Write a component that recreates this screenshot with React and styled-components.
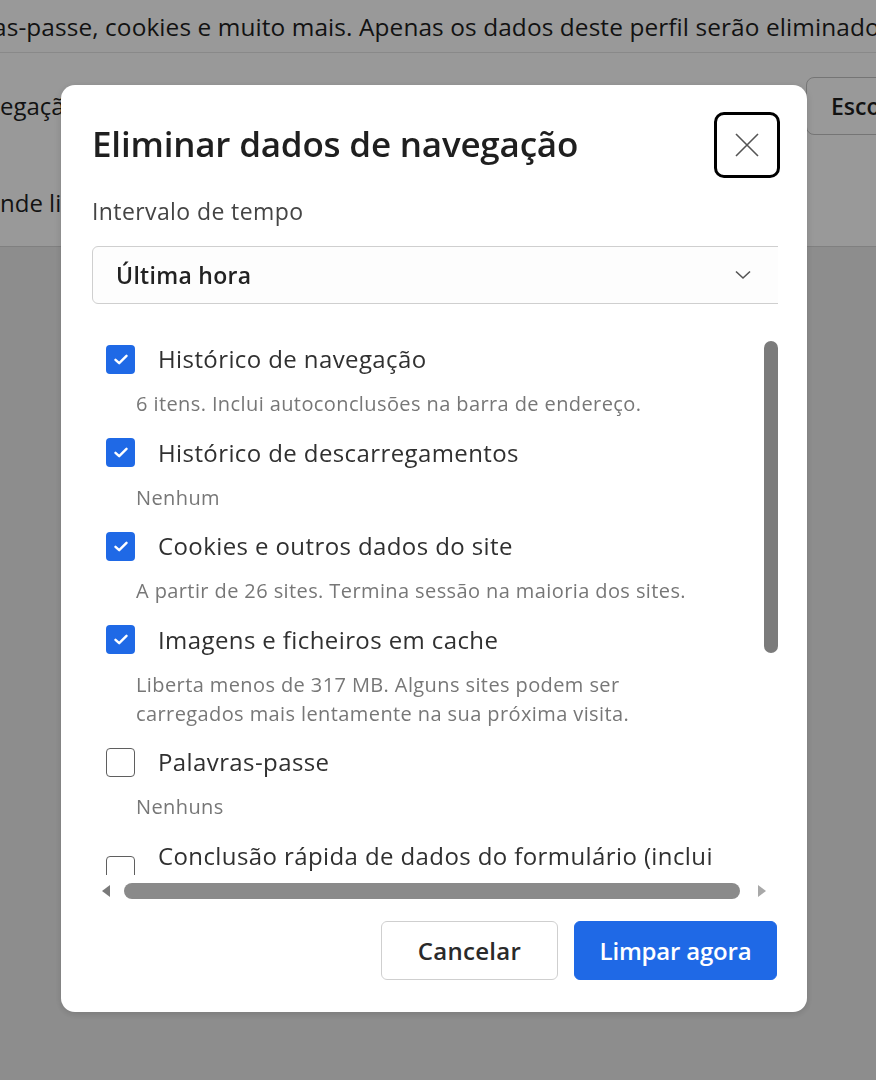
import React from 'react';
import styled, { createGlobalStyle } from 'styled-components';

const GlobalStyle = createGlobalStyle`
  html, body {
    margin: 0;
    padding: 0;
    background: #ececec;
    font-family: "Open Sans", "Liberation Sans", sans-serif;
    overflow: hidden;
  }
`;

const Page = styled.div`
  width: 876px;
  height: 1080px;
  display: flex;
  flex-direction: column;
`;

const Card = styled.div`
  background: #ffffff;
  border-bottom: 1px solid #d6d6d6;
  display: flex;
  flex-direction: column;
`;

const TopLine = styled.div`
  height: 52px;
  display: flex;
  align-items: center;
  font-size: 24.4px;
  letter-spacing: 0.1px;
  color: #1f1f1f;
  white-space: nowrap;
  overflow: hidden;
  text-indent: -7px;
  border-bottom: 1px solid #e4e4e4;
`;

const CardRow = styled.div`
  height: ${p => p.$h}px;
  display: flex;
  align-items: center;
  font-size: 24px;
  color: #1f1f1f;
  white-space: nowrap;
  overflow: hidden;
`;

const GhostButton = styled.div`
  flex: 0 0 200px;
  height: 58px;
  box-sizing: border-box;
  padding: 0 24px;
  margin-left: auto;
  margin-right: -130px;
  border: 1px solid #c4c4c4;
  border-radius: 8px;
  display: flex;
  align-items: center;
  font-size: 23px;
  font-weight: 600;
  color: #1f1f1f;
`;

const Overlay = styled.div`
  position: fixed;
  inset: 0;
  background: rgba(0, 0, 0, 0.4);
`;

const Dialog = styled.div`
  position: fixed;
  left: 61px;
  top: 85px;
  width: 746px;
  height: 927px;
  box-sizing: border-box;
  background: #ffffff;
  border-radius: 14px;
  padding: 27px 27px 31px 31px;
  display: flex;
  flex-direction: column;
  box-shadow: 0 2px 8px rgba(0, 0, 0, 0.15);
`;

const Header = styled.div`
  display: flex;
  align-items: center;
  justify-content: space-between;
  height: 66px;
`;

const Title = styled.h1`
  margin: 0 0 4px;
  font-size: 35px;
  font-weight: 600;
  color: #1f1f1f;
  letter-spacing: -0.2px;
`;

const CloseButton = styled.button`
  width: 66px;
  height: 66px;
  box-sizing: border-box;
  border: 3px solid #000000;
  border-radius: 10px;
  background: #ffffff;
  display: flex;
  align-items: center;
  justify-content: center;
  padding: 0;
`;

const Body = styled.div`
  margin-right: 2px;
  overflow: hidden;
  display: flex;
  flex-direction: column;
`;

const FieldLabel = styled.div`
  margin-top: 18px;
  font-size: 23px;
  letter-spacing: 0.4px;
  line-height: 30px;
  color: #444444;
`;

const Select = styled.div`
  margin-top: 20px;
  width: 700px;
  height: 58px;
  box-sizing: border-box;
  border: 1px solid #cfcfcf;
  border-radius: 6px;
  background: #fdfdfd;
  display: flex;
  align-items: center;
  justify-content: space-between;
  padding: 0 40px 0 23px;
  font-size: 23px;
  letter-spacing: 0.3px;
  font-weight: 600;
  color: #222222;
`;

const ListArea = styled.div`
  margin-top: 24px;
  height: 547px;
  display: flex;
  overflow: hidden;
`;

const List = styled.div`
  flex: 1;
  display: flex;
  flex-direction: column;
  gap: 19.5px;
  padding-top: 16px;
`;

const Item = styled.div`
  display: flex;
  flex-direction: column;
`;

const ItemRow = styled.label`
  display: flex;
  align-items: center;
  gap: 23px;
  padding-left: 14px;
`;

const Box = styled.span`
  flex: 0 0 29px;
  width: 29px;
  height: 29px;
  box-sizing: border-box;
  border-radius: 4px;
  background: ${p => (p.$checked ? '#1f69e6' : '#ffffff')};
  border: ${p => (p.$checked ? 'none' : '1.5px solid #5f5f5f')};
  display: flex;
  align-items: center;
  justify-content: center;
`;

const ItemLabel = styled.span`
  font-size: 24px;
  letter-spacing: 0.4px;
  line-height: 30px;
  color: #303030;
  max-width: 590px;
`;

const ItemSub = styled.div`
  margin-top: 15px;
  padding-left: 44px;
  font-size: 20px;
  letter-spacing: 0.4px;
  line-height: 29px;
  color: #777777;
  max-width: 566px;
`;

const VTrack = styled.div`
  flex: 0 0 18px;
  padding-top: 13px;
  display: flex;
  justify-content: flex-end;
`;

const VThumb = styled.div`
  width: 14px;
  height: 312px;
  border-radius: 7px;
  background: #7b7b7b;
`;

const HTrack = styled.div`
  height: 24px;
  margin-top: 4px;
  display: flex;
  align-items: center;
  padding: 0 12px 0 10px;
  gap: 14px;
`;

const Arrow = styled.span`
  width: 0;
  height: 0;
  border-top: 6px solid transparent;
  border-bottom: 6px solid transparent;
  ${p => (p.$dir === 'left'
    ? 'border-right: 8px solid #7a7a7a;'
    : 'border-left: 8px solid #a8a8a8;')}
`;

const HThumb = styled.div`
  flex: 1;
  height: 16px;
  border-radius: 8px;
  background: #8a8a8a;
  margin-right: 4px;
`;

const Footer = styled.div`
  margin-top: 18px;
  margin-right: 3px;
  display: flex;
  justify-content: flex-end;
  gap: 16px;
`;

const Button = styled.button`
  width: ${p => (p.$primary ? 203 : 177)}px;
  height: 59px;
  box-sizing: border-box;
  padding: 0;
  border-radius: 6px;
  border: 1px solid ${p => (p.$primary ? '#1f69e6' : '#cfcfcf')};
  background: ${p => (p.$primary ? '#1f69e6' : '#ffffff')};
  color: ${p => (p.$primary ? '#ffffff' : '#2a2a2a')};
  font-family: "Open Sans", "Liberation Sans", sans-serif;
  font-size: 24px;
  letter-spacing: ${p => (p.$primary ? -0.2 : 0.3)}px;
  font-weight: 600;
`;

const Check = () => (
  <svg width="14" height="11" viewBox="0 0 14 11" fill="none">
    <path d="M1.5 5.8 L5.2 9.2 L12.5 1.8" stroke="#ffffff" strokeWidth="2.4" strokeLinecap="round" strokeLinejoin="round" />
  </svg>
);

const items = [
  { label: 'Histórico de navegação', sub: '6 itens. Inclui autoconclusões na barra de endereço.', checked: true },
  { label: 'Histórico de descarregamentos', sub: 'Nenhum', checked: true },
  { label: 'Cookies e outros dados do site', sub: 'A partir de 26 sites. Termina sessão na maioria dos sites.', checked: true },
  { label: 'Imagens e ficheiros em cache', sub: 'Liberta menos de 317 MB. Alguns sites podem ser carregados mais lentamente na sua próxima visita.', checked: true },
  { label: 'Palavras-passe', sub: 'Nenhuns', checked: false },
  { label: 'Conclusão rápida de dados do formulário (inclui moradas e cartões)', sub: '', checked: false },
];

export default function App() {
  return (
    <>
      <GlobalStyle />
      <Page>
        <Card>
          <TopLine>as-passe, cookies e muito mais. Apenas os dados deste perfil serão eliminados.</TopLine>
          <CardRow $h={105}>
            <span>egação</span>
            <GhostButton>Escolher</GhostButton>
          </CardRow>
          <CardRow $h={88}>
            <span>nde limpar</span>
          </CardRow>
        </Card>
      </Page>
      <Overlay />
      <Dialog role="dialog">
        <Header>
          <Title>Eliminar dados de navegação</Title>
          <CloseButton aria-label="Fechar">
            <svg width="26" height="26" viewBox="0 0 26 26">
              <path d="M2 2 L24 24 M24 2 L2 24" stroke="#555555" strokeWidth="1.6" />
            </svg>
          </CloseButton>
        </Header>
        <Body>
          <FieldLabel>Intervalo de tempo</FieldLabel>
          <Select>
            <span>Última hora</span>
            <svg width="16" height="10" viewBox="0 0 16 10">
              <path d="M1 1.5 L8 8 L15 1.5" stroke="#555555" strokeWidth="1.6" fill="none" />
            </svg>
          </Select>
          <ListArea>
            <List>
              {items.map(it => (
                <Item key={it.label}>
                  <ItemRow>
                    <Box $checked={it.checked}>{it.checked && <Check />}</Box>
                    <ItemLabel>{it.label}</ItemLabel>
                  </ItemRow>
                  {it.sub && <ItemSub>{it.sub}</ItemSub>}
                </Item>
              ))}
            </List>
            <VTrack>
              <VThumb />
            </VTrack>
          </ListArea>
          <HTrack>
            <Arrow $dir="left" />
            <HThumb />
            <Arrow $dir="right" />
          </HTrack>
        </Body>
        <Footer>
          <Button>Cancelar</Button>
          <Button $primary>Limpar agora</Button>
        </Footer>
      </Dialog>
    </>
  );
}
